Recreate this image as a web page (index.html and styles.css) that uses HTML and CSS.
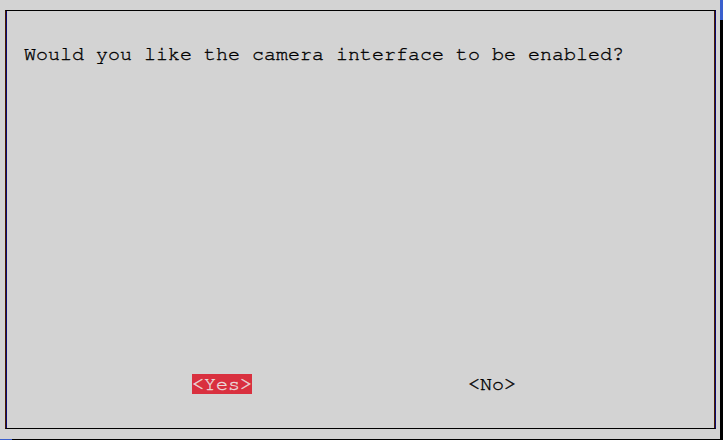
FILE: index.html
```html
<!DOCTYPE html>
<html>
<head>
<meta charset="utf-8">
<link rel="stylesheet" href="styles.css">
</head>
<body>
<div class="screen">
  <div class="main">
    <div class="dialog">
      <p class="message">Would you like the camera interface to be enabled?</p>
      <div class="buttons">
        <span class="btn btn-active">&lt;Yes&gt;</span>
        <span class="btn">&lt;No&gt;</span>
      </div>
    </div>
  </div>
  <div class="side"><div class="side-top"></div></div>
</div>
<div class="bottom"><div class="bottom-left"></div></div>
</body>
</html>
```
FILE: styles.css
```css
html, body {
  margin: 0;
  padding: 0;
}
body {
  width: 723px;
  height: 440px;
  overflow: hidden;
  background: #d3d3d3;
  font-family: "Nimbus Mono PS", "Nimbus Mono L", "FreeMono", "Liberation Mono", monospace;
  font-size: 20px;
  color: #000;
  -webkit-text-stroke: 0.35px currentColor;
}
.screen {
  display: flex;
  height: 439px;
}
.main {
  width: 720px;
  padding: 10px 0 0 5px;
  box-sizing: border-box;
}
.dialog {
  width: 711px;
  height: 419px;
  box-sizing: border-box;
  border-top: 1px solid #000;
  border-bottom: 1px solid #000;
  border-left: 1px solid #4a1c00;
  border-right: 1px solid #0a0a70;
  box-shadow: inset 1px 0 0 #0a0a70, inset -1px 0 0 #4a1c00;
  display: flex;
  flex-direction: column;
}
.message {
  margin: 0;
  padding: 31px 0 0 18px;
  line-height: 24px;
  white-space: pre;
  color: #000;
}
.buttons {
  margin-top: auto;
  display: flex;
  padding: 0 0 34px 186px;
  gap: 216px;
}
.btn {
  display: block;
  line-height: 20px;
  height: 20px;
  color: #000;
}
.btn-active {
  background: #d9303f;
  color: #eadada;
}
.side {
  width: 3px;
  background: #000;
}
.side-top {
  height: 20px;
  background: #3a5fcd;
}
.bottom {
  height: 1px;
  background: #000;
}
.bottom-left {
  width: 12px;
  height: 1px;
  background: #3a5fcd;
}
```
